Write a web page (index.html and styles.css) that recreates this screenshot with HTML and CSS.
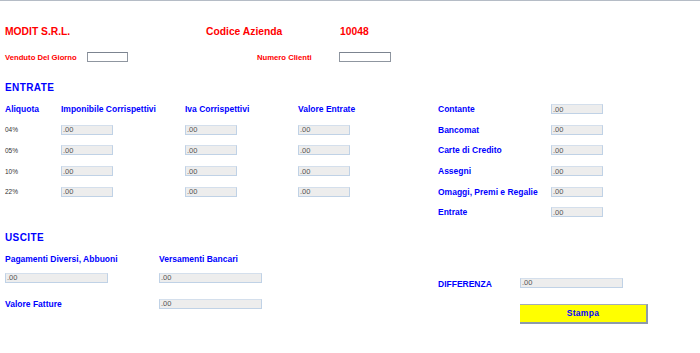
FILE: index.html
```html
<!DOCTYPE html>
<html lang="it">
<head>
  <meta charset="UTF-8" />
  <title>Chiusura Cassa</title>
  <link rel="stylesheet" href="styles.css">
</head>
<body>
  <div class="page">
    <div class="company">
      <span class="company-name">MODIT S.R.L.</span>
      <span class="company-code-label">Codice Azienda</span>
      <span>10048</span>
    </div>

    <div class="day">
      <span class="day-label">Venduto Del Giorno</span>
      <input class="field-white" type="text" />
      <span class="day-label day-label--far">Numero Clienti</span>
      <input class="field-white field-white--wide" type="text" />
    </div>

    <h2 class="section">ENTRATE</h2>

    <div class="entrate">
      <div class="iva-grid">
        <span class="label-blue">Aliquota</span>
        <span class="label-blue">Imponibile Corrispettivi</span>
        <span class="label-blue">Iva Corrispettivi</span>
        <span class="label-blue">Valore Entrate</span>

        <span class="rate">04%</span>
        <input class="field" type="text" value=".00" readonly />
        <input class="field" type="text" value=".00" readonly />
        <input class="field" type="text" value=".00" readonly />

        <span class="rate">05%</span>
        <input class="field" type="text" value=".00" readonly />
        <input class="field" type="text" value=".00" readonly />
        <input class="field" type="text" value=".00" readonly />

        <span class="rate">10%</span>
        <input class="field" type="text" value=".00" readonly />
        <input class="field" type="text" value=".00" readonly />
        <input class="field" type="text" value=".00" readonly />

        <span class="rate">22%</span>
        <input class="field" type="text" value=".00" readonly />
        <input class="field" type="text" value=".00" readonly />
        <input class="field" type="text" value=".00" readonly />
      </div>

      <div class="pay-grid">
        <span class="label-blue">Contante</span>
        <input class="field" type="text" value=".00" readonly />
        <span class="label-blue">Bancomat</span>
        <input class="field" type="text" value=".00" readonly />
        <span class="label-blue">Carte di Credito</span>
        <input class="field" type="text" value=".00" readonly />
        <span class="label-blue">Assegni</span>
        <input class="field" type="text" value=".00" readonly />
        <span class="label-blue">Omaggi, Premi e Regalie</span>
        <input class="field" type="text" value=".00" readonly />
        <span class="label-blue">Entrate</span>
        <input class="field" type="text" value=".00" readonly />
      </div>
    </div>

    <div class="uscite">
      <div class="uscite-main">
        <h2 class="section section--uscite">USCITE</h2>
        <div class="uscite-row uscite-row--head">
          <span class="label-blue uscite-cell">Pagamenti Diversi, Abbuoni</span>
          <span class="label-blue">Versamenti Bancari</span>
        </div>
        <div class="uscite-row uscite-row--inputs">
          <span class="uscite-cell"><input class="field field--wide" type="text" value=".00" readonly /></span>
          <input class="field field--wide" type="text" value=".00" readonly />
        </div>
        <div class="uscite-row uscite-row--fatture">
          <span class="label-blue uscite-cell">Valore Fatture</span>
          <input class="field field--wide" type="text" value=".00" readonly />
        </div>
      </div>

      <div class="uscite-side">
        <div class="diff-row">
          <span class="label-blue diff-label">DIFFERENZA</span>
          <input class="field field--wide" type="text" value=".00" readonly />
        </div>
        <button class="stampa" onclick="window.print()">Stampa</button>
      </div>
    </div>
  </div>
</body>
</html>
```

FILE: styles.css
```css
body {
  margin: 0;
  border-top: 1px solid #b5bcc6;
  background-color: #fff;
  font-family: "Liberation Sans", Arial, sans-serif;
}
.page {
  padding: 24px 0 0 5px;
}
.company {
  display: flex;
  height: 14px;
  line-height: 14px;
  font-size: 10.3px;
  font-weight: bold;
  color: #f00;
}
.company-name {
  width: 201px;
}
.company-code-label {
  width: 134px;
}
.day {
  display: flex;
  align-items: center;
  height: 10px;
  margin-top: 13px;
  font-size: 7.7px;
  font-weight: bold;
  color: #f00;
}
.day-label {
  width: 82px;
  white-space: nowrap;
}
.day-label--far {
  margin-left: 129px;
}
.field-white {
  width: 41px;
  height: 10px;
  box-sizing: border-box;
  margin: 0;
  padding: 0;
  border: 1px solid #8f96a0;
  border-top-color: #7c8490;
  background-color: #fff;
}
.field-white--wide {
  width: 52px;
}
.section {
  margin: 20px 0 0;
  font-size: 10px;
  line-height: 12px;
  letter-spacing: 0.4px;
  font-weight: 900;
  color: #00f;
}
.section--uscite {
  margin-top: 0;
}
.entrate {
  display: flex;
  margin-top: 5px;
}
.iva-grid {
  display: grid;
  grid-template-columns: 56px 124px 113px 140px;
  grid-auto-rows: 20.6px;
  align-items: center;
}
.pay-grid {
  display: grid;
  grid-template-columns: 113px 52px;
  grid-auto-rows: 20.6px;
  align-items: center;
}
.label-blue {
  font-size: 8.5px;
  font-weight: bold;
  color: #00f;
  white-space: nowrap;
}
.rate {
  font-size: 6.5px;
  color: #333;
}
.field {
  width: 52px;
  height: 10px;
  box-sizing: border-box;
  margin: 0;
  padding: 0 0 0 1px;
  border: 1px solid #c0d2e6;
  border-top-color: #d4dfec;
  background-color: #ededed;
  font-family: "Liberation Sans", Arial, sans-serif;
  font-size: 7.5px;
  color: #555;
}
.field--wide {
  width: 103px;
}
.uscite {
  display: flex;
  margin-top: 9.4px;
}
.uscite-main {
  width: 433px;
}
.uscite-row {
  display: flex;
  align-items: center;
  height: 14px;
}
.uscite-row--head {
  margin-top: 8px;
}
.uscite-row--inputs {
  margin-top: 5px;
}
.uscite-row--fatture {
  margin-top: 12px;
}
.uscite-cell {
  display: flex;
  width: 154px;
}
.uscite-side {
  padding-top: 44px;
}
.diff-row {
  display: flex;
  align-items: center;
  height: 14px;
}
.diff-label {
  width: 82px;
  padding-top: 2px;
}
.stampa {
  display: block;
  width: 128px;
  height: 20px;
  box-sizing: border-box;
  margin: 14px 0 0 82px;
  padding: 0;
  border: 0;
  border-top: 1px solid #a3acb8;
  border-right: 2px solid #8d9bab;
  border-bottom: 2px solid #8d9bab;
  background-color: #ff0;
  font-family: "Liberation Sans", Arial, sans-serif;
  font-size: 8.5px;
  font-weight: bold;
  letter-spacing: 0.3px;
  color: #00f;
  cursor: pointer;
}
```
